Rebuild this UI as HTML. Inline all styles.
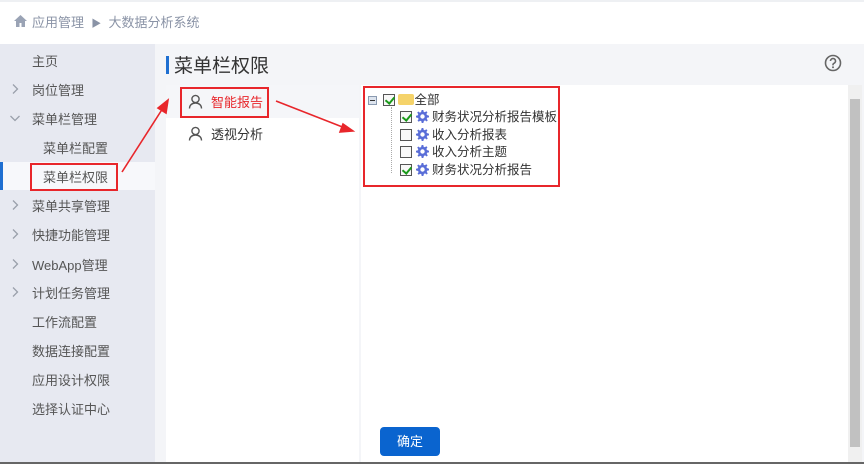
<!DOCTYPE html>
<html><head><meta charset="utf-8"><style>
*{margin:0;padding:0;box-sizing:border-box}
body{width:864px;height:464px;overflow:hidden;background:#f4f5f8;font-family:"Liberation Sans","Noto Sans CJK SC",sans-serif;position:relative;color:#333}
.abs{position:absolute}
.hdr{left:0;top:0;width:864px;height:44px;background:#fff;border-top:2px solid #eef0f3}
.bc{top:12px;left:32px;font-size:13px;color:#8a93a6;white-space:nowrap}
.side{left:0;top:44px;width:155px;height:418px;background:#e7e9f1}
.it{position:absolute;left:32px;font-size:13px;color:#555;white-space:nowrap}
.ar{position:absolute;left:10px;width:10px;height:12px}
.sel{position:absolute;left:0;width:155px;height:28px;background:#f7f8fb}
.title{left:174px;top:51px;font-size:19px;color:#333}
.bar{left:166px;top:56px;width:3px;height:18px;background:#1f6fd1}
.lp{left:166px;top:85px;width:193px;height:377px;background:#fff}
.rp{left:361px;top:85px;width:487px;height:377px;background:#fff}
.sb{left:848px;top:85px;width:14px;height:377px;background:#f0f0f0}
.th{left:850px;top:99px;width:10px;height:348px;background:#c1c1c1}
.tr{position:absolute;font-size:12.5px;white-space:nowrap;color:#333;height:17px;line-height:17px}
.cb{display:inline-block;width:12px;height:12px;border:1px solid #555;background:#f8f8f8;vertical-align:-2px;position:relative}
.ck::after{content:"";position:absolute;left:3px;top:0px;width:4px;height:7px;border:solid #1a9a1a;border-width:0 2px 2px 0;transform:rotate(40deg)}
.g{display:inline-block;width:13px;height:13px;margin:0 3px 0 4px;vertical-align:-2px}
.rb{position:absolute;border:2px solid #e8262b}
.btn{left:380px;top:427px;width:60px;height:29px;background:#0a64cf;border-radius:4px;color:#fff;font-size:13px;text-align:center;line-height:29px}
.bottom{left:0;top:462px;width:864px;height:2px;background:#666}
</style></head><body>
<svg width="0" height="0" style="position:absolute"><defs><symbol id="gear" viewBox="0 0 16 16"><path fill="#5a6ed8" d="M7 0h2l.4 2.2 1.5.6 1.8-1.3 1.4 1.4-1.3 1.8.6 1.5L16 7v2l-2.2.4-.6 1.5 1.3 1.8-1.4 1.4-1.8-1.3-1.5.6L9 16H7l-.4-2.2-1.5-.6-1.8 1.3-1.4-1.4 1.3-1.8-.6-1.5L0 9V7l2.2-.4.6-1.5L1.5 3.3l1.4-1.4 1.8 1.3 1.5-.6zM8 5.3A2.7 2.7 0 1 0 8 10.7 2.7 2.7 0 1 0 8 5.3z"/></symbol><symbol id="chev" viewBox="0 0 10 12"><path d="M3 1.5l4.5 4.5L3 10.5" fill="none" stroke="#9aa0ab" stroke-width="1.3"/></symbol><symbol id="user" viewBox="0 0 15 15"><circle cx="7.5" cy="5" r="3.6" fill="none" stroke="#555" stroke-width="1.4"/><path d="M1.5 14.5c0-3.5 2.7-5.5 6-5.5s6 2 6 5.5" fill="none" stroke="#555" stroke-width="1.4"/></symbol></defs></svg>
<div class="abs hdr"></div>
<svg class="abs" style="left:14px;top:15px" width="13" height="12" viewBox="0 0 13 12"><path d="M6.5 0L0 6h2v6h3.5V8h2v4H11V6h2z" fill="#9aa3b5"/></svg>
<div class="abs bc">应用管理 &nbsp;<span style="font-size:10px">▶</span>&nbsp; 大数据分析系统</div>
<div class="abs side">
<div class="sel" style="top:118px"></div>
<div style="position:absolute;left:0;top:118px;width:3px;height:28px;background:#1f6fd1"></div>
<div class="it" style="top:7px">主页</div>
<svg class="ar" style="top:39px"><use href="#chev"/></svg><div class="it" style="top:36px">岗位管理</div>
<svg class="ar" style="top:68px;transform:rotate(90deg)"><use href="#chev"/></svg><div class="it" style="top:65px">菜单栏管理</div>
<div class="it" style="top:94px;left:43px">菜单栏配置</div>
<div class="it" style="top:123px;left:43px">菜单栏权限</div>
<svg class="ar" style="top:155px"><use href="#chev"/></svg><div class="it" style="top:152px">菜单共享管理</div>
<svg class="ar" style="top:184px"><use href="#chev"/></svg><div class="it" style="top:181px">快捷功能管理</div>
<svg class="ar" style="top:214px"><use href="#chev"/></svg><div class="it" style="top:211px">WebApp管理</div>
<svg class="ar" style="top:242px"><use href="#chev"/></svg><div class="it" style="top:239px">计划任务管理</div>
<div class="it" style="top:268px">工作流配置</div>
<div class="it" style="top:297px">数据连接配置</div>
<div class="it" style="top:326px">应用设计权限</div>
<div class="it" style="top:355px">选择认证中心</div>
</div>
<div class="abs bar"></div>
<div class="abs title">菜单栏权限</div>
<svg class="abs" style="left:824px;top:54px" width="18" height="18" viewBox="0 0 18 18"><circle cx="9" cy="9" r="7.5" fill="none" stroke="#666" stroke-width="1.6"/><path d="M6.5 7a2.5 2.5 0 1 1 3.5 2.3c-.7.3-1 .8-1 1.5v.6" fill="none" stroke="#666" stroke-width="1.6"/><circle cx="9" cy="13.3" r="1" fill="#666"/></svg>
<div class="abs lp">
<div style="position:absolute;left:0;top:0;width:193px;height:33px;background:#f5f6f9"></div>
<svg style="position:absolute;left:22px;top:9px" width="15" height="15"><use href="#user"/></svg>
<div style="position:absolute;left:45px;top:7px;font-size:13px;color:#e8262b">智能报告</div>
<svg style="position:absolute;left:22px;top:41px" width="15" height="15"><use href="#user"/></svg>
<div style="position:absolute;left:45px;top:39px;font-size:13px">透视分析</div>
</div>
<div class="abs rp">
<div style="position:absolute;left:7px;top:11px;width:9px;height:9px;border:1px solid #8a9ab0;background:#dde4ee"><div style="position:absolute;left:1px;top:3px;width:5px;height:1px;background:#333"></div></div>
<div class="tr" style="left:22px;top:7px"><span class="cb ck"></span> <span style="display:inline-block;width:16px;height:11px;background:#f5d36a;border-radius:2px;vertical-align:-1px"></span>全部</div>
<div style="position:absolute;left:30px;top:22px;height:66px;border-left:1px dotted #aaa"></div>
<div class="tr" style="left:39px;top:24px"><span class="cb ck"></span><svg class="g"><use href="#gear"/></svg>财务状况分析报告模板</div>
<div class="tr" style="left:39px;top:41.5px"><span class="cb"></span><svg class="g"><use href="#gear"/></svg>收入分析报表</div>
<div class="tr" style="left:39px;top:59px"><span class="cb"></span><svg class="g"><use href="#gear"/></svg>收入分析主题</div>
<div class="tr" style="left:39px;top:76.5px"><span class="cb ck"></span><svg class="g"><use href="#gear"/></svg>财务状况分析报告</div>
</div>
<div class="abs sb"></div><div class="abs th"></div>
<div class="abs btn">确定</div>
<div class="rb" style="left:30px;top:163px;width:88px;height:28px"></div>
<div class="rb" style="left:180px;top:87px;width:89px;height:31px"></div>
<div class="rb" style="left:363px;top:86px;width:197px;height:101px"></div>
<svg class="abs" style="left:0;top:0" width="864" height="464"><g stroke="#e8262b" stroke-width="1.6" fill="#e8262b"><line x1="122" y1="172" x2="163" y2="108"/><polygon points="168,100 166,113 158,108"/><line x1="276" y1="101" x2="345" y2="128"/><polygon points="353,131 340,132 343,124"/></g></svg>
<div class="abs bottom"></div>
</body></html>
